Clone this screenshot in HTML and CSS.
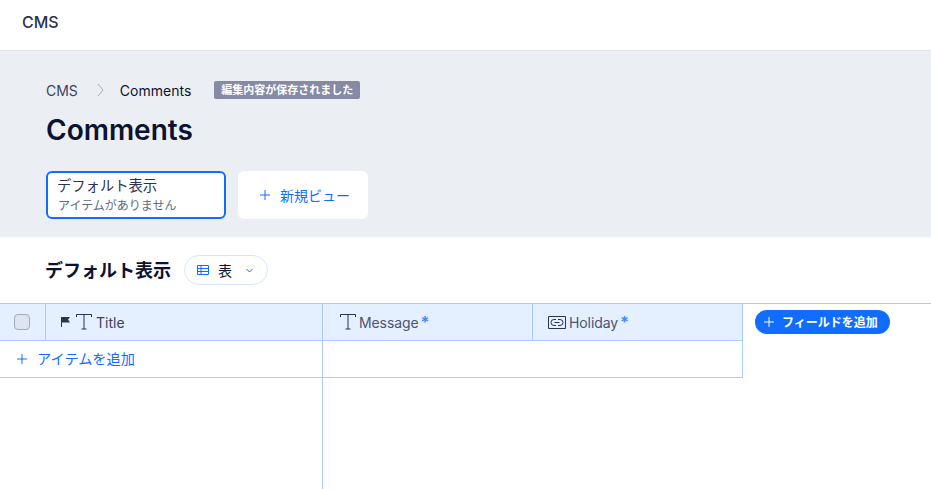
FILE: index.html
```html
<!DOCTYPE html>
<html lang="ja">
<head>
    <meta charset="utf-8" />
    <title>CMS - Comments</title>
    <link rel="stylesheet" href="styles.css">
</head>
<body>
<header class="topbar">CMS</header>

<section class="hero">
    <nav class="crumbs">
        <span class="crumb-root">CMS</span>
        <svg class="crumb-sep" width="8" height="14" viewBox="0 0 8 14"><path d="M1 1l5 6-5 6" fill="none" stroke="#a8adbd" stroke-width="1"/></svg>
        <span class="crumb-current">Comments</span>
        <span class="saved-badge">編集内容が保存されました</span>
    </nav>
    <h1 class="page-title">Comments</h1>
    <div class="views">
        <div class="view-card">
            <div class="view-name">デフォルト表示</div>
            <div class="view-count">アイテムがありません</div>
        </div>
        <div class="new-view">
            <svg width="10" height="10" viewBox="0 0 10 10"><path d="M5 0v10M0 5h10" stroke="#116dff" stroke-width="1"/></svg>
            <span>新規ビュー</span>
        </div>
    </div>
</section>

<main class="panel">
    <div class="panel-head">
        <h2 class="panel-title">デフォルト表示</h2>
        <div class="layout-pill">
            <svg width="12" height="10" viewBox="0 0 12 10"><path d="M.5.5h11v9H.5zM.5 3.500h11M.5 6.500h11M4 .5v9" fill="none" stroke="#116dff" stroke-width="1"/></svg>
            <span>表</span>
            <svg class="pill-caret" width="7" height="5" viewBox="0 0 7 5"><path d="M.5 1l3 3 3-3" fill="none" stroke="#116dff" stroke-width="1"/></svg>
        </div>
    </div>

    <div class="table">
        <div class="table-row head-row">
            <div class="cell check-cell"><span class="checkbox"></span></div>
            <div class="cell title-cell">
                <svg class="flag" width="9" height="10" viewBox="0 0 9 10"><path d="M0 0h9L7 2.500 9 5.500H1V10H0z" fill="#2b3350"/></svg>
                <svg class="type-icon" width="16" height="16" viewBox="0 0 16 16"><path d="M.5 3V.5h15V3M8 .5v14.500M5.500 15h5" fill="none" stroke="#2b3350" stroke-width="1"/></svg>
                <span>Title</span>
            </div>
            <div class="cell msg-cell">
                <svg class="type-icon" width="16" height="16" viewBox="0 0 16 16"><path d="M.5 3V.5h15V3M8 .5v14.500M5.500 15h5" fill="none" stroke="#2b3350" stroke-width="1"/></svg>
                <span class="muted">Message</span><span class="req">*</span>
            </div>
            <div class="cell holiday-cell">
                <svg class="type-icon" width="18" height="13" viewBox="0 0 18 13"><path d="M.5.500h17v12H.5z" fill="none" stroke="#2b3350" stroke-width="1"/><path d="M8 3.500H6a3 3 0 000 6h2M10 3.500h2a3 3 0 010 6h-2M6.500 6.500h5" fill="none" stroke="#2b3350" stroke-width="1"/></svg>
                <span class="muted">Holiday</span><span class="req">*</span>
            </div>
            <div class="add-wrap">
                <div class="add-field">
                    <svg width="10" height="10" viewBox="0 0 10 10"><path d="M5 0v10M0 5h10" stroke="#fff" stroke-width="1"/></svg>
                    <span>フィールドを追加</span>
                </div>
            </div>
        </div>
        <div class="table-row add-row">
            <div class="cell add-item">
                <svg width="10" height="10" viewBox="0 0 10 10"><path d="M5 0v10M0 5h10" stroke="#116dff" stroke-width="1"/></svg>
                <span>アイテムを追加</span>
            </div>
            <div class="cell add-rest"></div>
        </div>
        <div class="table-rest"></div>
    </div>
</main>
</body>
</html>
```

FILE: styles.css
```css
html, body {margin:0; padding:0; background:#fff;}
body {height:489px; overflow:hidden; display:flex; flex-direction:column; font-family:"Inter","Noto Sans CJK JP",sans-serif; color:#0c1230;}
svg {display:block; flex:none;}

.topbar {height:50px; border-bottom:1px solid #dfe1e6; padding-left:22px; font-size:16px; font-weight:500; line-height:45px; color:#2b3350;}

.hero {height:186px; box-sizing:border-box; background:#ebeff4; padding:30px 46px 0;}
.crumbs {display:flex; align-items:center; height:18px; font-size:14px;}
.crumb-root {color:#3b4260;}
.crumb-sep {margin:0 15px 0 19px;}
.crumb-current {color:#0c1230;}
.saved-badge {margin-left:23px; height:18px; padding:0 7px; border-radius:2px; background:#868aa5; color:#fff; font-size:11px; font-weight:700; line-height:18px;}
.page-title {margin:14px 0 0; font-size:28px; font-weight:600; line-height:34px; color:#0c1230;}
.views {display:flex; gap:12px; margin-top:24px;}
.view-card {width:180px; height:48px; box-sizing:border-box; border:2px solid #116dff; border-radius:6px; background:#fff; padding:3px 9px 0;}
.view-name {font-size:14.300px; line-height:19px; color:#2b3350;}
.view-count {font-size:12px; line-height:17px; color:#62677f; padding:2px 0 0 1px;}
.new-view {width:130px; height:48px; box-sizing:border-box; display:flex; align-items:center; gap:10px; padding-left:22px; border-radius:6px; background:#fff; color:#116dff; font-size:14px;}

.panel {flex:1; background:#fff; border-radius:6px 0 0 0;}
.panel-head {height:66px; box-sizing:border-box; display:flex; align-items:center; padding-left:45px;}
.panel-title {margin:0 0 3px; font-size:18px; font-weight:700; color:#0c1230;}
.layout-pill {margin-left:13px; width:84px; height:30px; box-sizing:border-box; display:flex; align-items:center; padding-left:12px; border:1px solid #d6e6fe; border-radius:15px; font-size:14px; color:#0c1230;}
.layout-pill span {margin-left:9px;}
.pill-caret {margin-left:14px;}

.table {border-top:1px solid #a8caff;}
.table-row {display:flex; height:37px; box-sizing:border-box; border-bottom:1px solid #a8caff;}
.cell {display:flex; align-items:center; box-sizing:border-box; border-right:1px solid #a8caff;}
.head-row {border-bottom:none;}
.head-row .cell {background:#e4efff; border-bottom:1px solid #a8caff;}
.check-cell {width:46px; justify-content:center; padding-right:1px;}
.checkbox {width:16px; height:16px; box-sizing:border-box; border:1px solid #a3a9b9; border-radius:4px; background:#dfe5f0;}
.title-cell {width:277px; padding-left:15px; font-size:14px; color:#3b4260;}
.flag {margin-right:6px;}
.type-icon {margin-right:3px;}
.title-cell span {margin-left:1px;}
.msg-cell {width:210px; padding-left:17px; font-size:14px;}
.holiday-cell {width:210px; padding-left:15px; font-size:14px;}
.muted {color:#4d5470; letter-spacing:-.1px;}
.req {color:#3f8bff; font-size:16px; font-weight:700; margin:-1px 0 0 2px;}
.add-wrap {padding:6px 0 0 12px;}
.add-field {height:24px; width:135px; box-sizing:border-box; display:flex; align-items:center; gap:8px; padding:0 0 2px 9px; border-radius:12px; background:#116dff; color:#fff; font-size:12px; font-weight:700;}
.add-field svg {margin-top:2px;}
.add-row {width:743px;}
.add-item {width:323px; padding:0 0 2px 17px; gap:10px; color:#116dff; font-size:14.200px;}
.add-item svg {margin-top:2px;}
.add-rest {flex:1;}
.table-rest {width:323px; height:111px; box-sizing:border-box; border-right:1px solid #a8caff;}
```
